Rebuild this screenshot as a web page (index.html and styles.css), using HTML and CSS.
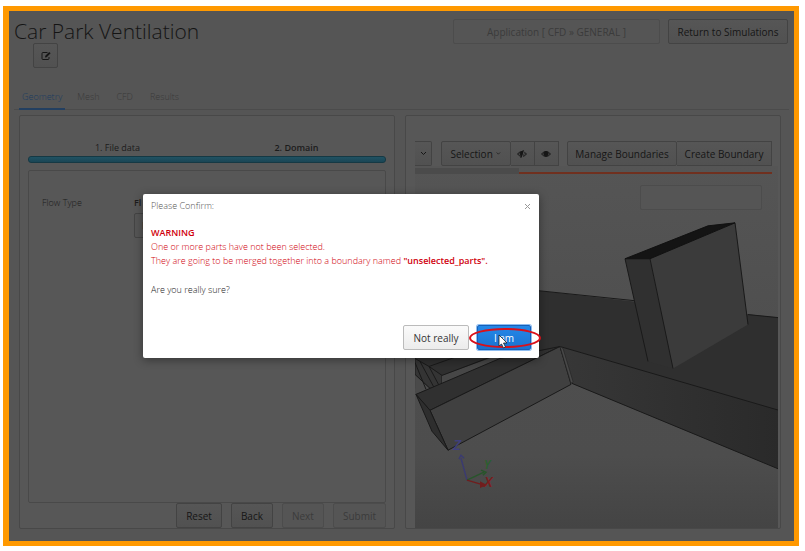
FILE: index.html
```html
<!DOCTYPE html>
<html lang="en">
<head>
<meta charset="utf-8">
<title>Car Park Ventilation</title>
<link rel="stylesheet" href="styles.css">
</head>
<body>
<div class="frame">
  <header class="header">
    <div class="heading">
      <h1>Car Park Ventilation</h1>
      <button class="btn edit" aria-label="Edit name">
        <svg width="10" height="10" viewBox="0 0 10 10" fill="none" stroke="currentColor"><path d="M6.5 1.500H2Q1 1.500 1 2.500V7.500Q1 8.500 2 8.500H7Q8 8.500 8 7.500V6"/><path d="M4 6.500L4.300 4.800L8.200 .900L9.600 2.300L5.700 6.200Z" fill="currentColor" stroke="none"/></svg>
      </button>
    </div>
    <div class="actions">
      <button class="btn app" disabled>Application [ CFD » GENERAL ]</button>
      <button class="btn return">Return to Simulations</button>
    </div>
  </header>
  <nav class="tabs">
    <a href="#geometry" class="tab active">Geometry</a>
    <a href="#mesh" class="tab">Mesh</a>
    <a href="#cfd" class="tab">CFD</a>
    <a href="#results" class="tab">Results</a>
  </nav>
  <main class="main">
    <section class="panel wizard">
      <div class="steps"><span>1. File data</span><span class="current">2. Domain</span></div>
      <div class="progress"></div>
      <div class="form">
        <label for="flow">Flow Type</label>
        <div class="field"><b>Fl</b><input id="flow" class="flow" value="I"></div>
      </div>
      <div class="footer">
        <button class="btn">Reset</button>
        <button class="btn">Back</button>
        <button class="btn" disabled>Next</button>
        <button class="btn" disabled>Submit</button>
      </div>
    </section>
    <section class="panel viewer">
      <div class="toolbar">
        <button class="btn cut" aria-label="More"><svg width="7" height="5" viewBox="0 0 7 5" fill="none" stroke="currentColor"><path d="M1 1L3.500 3.500L6 1"/></svg></button>
        <div class="group">
          <button class="btn sel">Selection <svg width="7" height="5" viewBox="0 0 7 5" fill="none" stroke="currentColor"><path d="M1 1L3.500 3.500L6 1"/></svg></button>
          <button class="btn eye" aria-label="Hide"><svg width="10" height="8" viewBox="0 0 10 8" fill="none" stroke="currentColor"><path d="M.5 4Q5 -1 9.500 4Q5 9 .5 4Z"/><circle cx="5" cy="3.700" r="2" fill="currentColor"/><path d="M7.500 0L5 8" stroke="#535353"/><path d="M6.300 0L3.800 8"/></svg></button>
          <button class="btn eye" aria-label="Show"><svg width="10" height="8" viewBox="0 0 10 8" fill="none" stroke="currentColor"><path d="M.5 4Q5 -1 9.500 4Q5 9 .5 4Z"/><circle cx="5" cy="3.700" r="2.200" fill="currentColor"/></svg></button>
        </div>
        <div class="group">
          <button class="btn manage">Manage Boundaries</button>
          <button class="btn create">Create Boundary</button>
        </div>
      </div>
      <div class="stage">
        <svg class="scene" viewBox="415 165 363 363" preserveAspectRatio="none" stroke-width="1">
          <defs>
            <linearGradient id="sky" x2="0" y2="1"><stop offset="0" stop-color="#555"/><stop offset=".5" stop-color="#4e4e4e"/><stop offset=".8" stop-color="#4d4d4d"/><stop offset="1" stop-color="#444"/></linearGradient>
            <linearGradient id="wall"><stop offset="0" stop-color="#373737"/><stop offset="1" stop-color="#2a2a2a"/></linearGradient>
          </defs>
          <path fill="url(#sky)" d="M415 165H778V528H415Z"/>
          <path fill="#2f2f2f" d="M415 278L538 290L778 317V411L560 346L416 394L415 360Z"/>
          <path stroke="#191919" fill="none" d="M538 290L634 300M748 314L778 317"/>
          <path fill="#4a4a4a" d="M415 374L430 388L416 394Z"/>
          <path fill="#343434" stroke="#191919" d="M415 358L429 366L442 375V384L430 388L415 374Z"/>
          <path fill="#474747" d="M442 375L492 357H510L442 384Z"/>
          <path stroke="#191919" fill="none" d="M415 362L426 389M420 361L434 387M429 366L460 355M429 366L439 385M442 375L492 356"/>
          <path fill="#303030" stroke="#191919" d="M416 394L500 358L560 346L430 410Z"/>
          <path fill="#404040" stroke="#191919" d="M430 410L560 346L571 384L448 450Z"/>
          <path fill="#2e2e2e" stroke="#191919" d="M416 394L430 410L448 450L432 431Z"/>
          <path fill="url(#wall)" stroke="#191919" d="M560 346L779 410V469L572 383Z"/>
          <path fill="#484848" stroke="#222" stroke-width=".6" d="M560 346L563 348L573 381L571 383Z"/>
          <path fill="#303030" d="M625 258H650L673 368L648 361Z"/>
          <path fill="#3b3b3b" d="M650 258L735 222L748 324L673 368Z"/>
          <path stroke="#191919" fill="none" d="M648 361L625 258M673 368L650 258M735 222L748 324"/>
          <path fill="#141414" stroke="#111" d="M625 258L708 225L735 222L650 258Z"/>
          <g fill="none" stroke-width="1.500">
            <path stroke="#3b3b70" d="M467 480L461 458M459 459L461 455L464 458"/>
            <path stroke="#28552b" d="M467 480L484 472M481 470L486 472L483 475"/>
            <path stroke="#701d1d" d="M467 480L484 485"/><path fill="#701d1d" stroke="none" d="M480 481L487 485L480 488Z"/>
          </g>
          <g class="axes"><text x="453" y="450" fill="#3f3f7c">Z</text><text x="484" y="469" fill="#2a602e" class="y">Y</text><text x="484" y="487" fill="#7a1d1d">X</text></g>
        </svg>
        <div class="loading"><i></i></div>
        <input class="search" aria-label="Part name">
      </div>
    </section>
  </main>

  <div class="dialog" role="dialog" aria-labelledby="confirm-title">
    <div class="caption"><span id="confirm-title">Please Confirm:</span><button class="close" aria-label="Close"><svg width="7" height="7" viewBox="0 0 7 7" stroke="currentColor"><path d="M1 1L6 6M6 1L1 6"/></svg></button></div>
    <p class="warning"><b>WARNING</b><br>One or more parts have not been selected.<br>They are going to be merged together into a boundary named <b>"unselected_parts".</b></p>
    <p class="question">Are you really sure?</p>
    <div class="choices">
      <button class="btn no">Not really</button>
      <button class="btn yes">I am</button>
      <svg class="marker" width="74" height="24" viewBox="0 0 74 24"><ellipse cx="37" cy="12" rx="35" ry="9" fill="none" stroke="#d9101a" stroke-width="2"/><path d="M31 9V20L33.500 18L35.500 22L37.500 21L35.500 17H39Z" fill="#fff" stroke="#222" stroke-width=".8"/></svg>
    </div>
  </div>
</div>
</body>
</html>
```
FILE: styles.css
```css
* { box-sizing: border-box; }
body {
  margin: 0;
  padding: 6px 6px 5px 3px;
  background: #fff;
  font: 9px/14px "Open Sans", sans-serif;
  color: #1c1c1c;
}
.frame {
  position: relative;
  display: flex;
  flex-direction: column;
  min-height: calc(100vh - 11px);
  border: 5px solid #ff9900;
  border-left-width: 6px;
  background: #555;
  padding: 0 5px 12px;
}
.header { display: flex; justify-content: space-between; height: 79px; }
.heading { padding-top: 4px; }
h1 { margin: 0; font-size: 21px; line-height: 32px; font-weight: 300; color: #141414; }
.btn {
  display: inline-flex;
  align-items: center;
  justify-content: center;
  gap: 3px;
  height: 25px;
  padding: 0 9px;
  border: 1px solid #434343;
  border-radius: 2px;
  background: linear-gradient(#565656, #515151);
  font: inherit;
  font-size: 10px;
  white-space: nowrap;
  color: #161616;
}
.btn:disabled { color: #3b3b3b; border-color: #4c4c4c; background: #555; }
.edit { width: 25px; padding: 0; margin: -4px 0 0 19px; display: flex; }
.actions { display: flex; gap: 8px; padding: 8px 1px 0 0; }
.app { width: 207px; }
.return { width: 120px; }
.tabs { display: flex; gap: 17px; height: 20px; padding-left: 5px; border-bottom: 1px solid #4b4b4b; font-weight: 300; }
.tab { height: 20px; color: #3a3a3a; text-decoration: none; }
.active { padding: 0 3px; margin-right: -5px; color: #1c3c60; border-bottom: 2px solid #233f60; }
.main { display: grid; grid-template-columns: 1fr 1fr; gap: 10px; flex: 1; padding: 5px 8px 0 5px; }
.panel { border: 1px solid #484848; border-radius: 2px; background: #575757; min-width: 0; }
.wizard { display: flex; flex-direction: column; padding: 25px 8px 0; }
.steps { display: grid; grid-template-columns: 1fr 1fr; text-align: center; }
.current { font-weight: 600; }
.progress { height: 7px; margin-top: 1px; border: 1px solid #153944; border-radius: 3px; background: linear-gradient(#205263, #1a4655); }
.form { display: flex; flex: 1; margin-top: 7px; padding: 25px 0 0 13px; border: 1px solid #494949; border-radius: 2px; font-weight: 300; }
.form label { width: 92px; }
.field b { display: block; font-weight: 600; }
.flow { width: 200px; height: 25px; margin-top: 3px; padding: 0 7px; background: #555; border: 1px solid #444; border-radius: 2px; font: inherit; color: #161616; }
.footer { display: flex; justify-content: flex-end; gap: 9px; }
.viewer { display: flex; flex-direction: column; padding: 25px 2px 0 9px; }
.toolbar { display: flex; justify-content: space-between; padding-right: 6px; }
.cut { width: 17px; padding: 0; border-left: 0; border-radius: 0 2px 2px 0; }
.group { display: flex; }
.group .btn + .btn { border-left: 0; border-radius: 0; }
.sel { width: 70px; }
.eye { width: 24px; padding: 0; }
.manage { width: 110px; }
.create { width: 95px; }
.stage { position: relative; flex: 1; min-height: 0; }
.scene { position: absolute; inset: 0; width: 100%; height: 100%; }
.loading { position: absolute; top: 2px; left: 0; right: 6px; height: 6px; background: linear-gradient(90deg, #4b4b4b 104px, transparent 104px); }
.loading i { position: absolute; left: 104px; right: 0; bottom: 0; height: 2px; background: #70301f; }
.search { position: absolute; top: 19px; right: 16px; width: 122px; height: 25px; background: #555; border: 1px solid #4c4c4c; border-radius: 2px; }
.axes { font: italic 600 15px "Open Sans", sans-serif; }
.y { font-size: 12px; }
.dialog {
  position: absolute;
  left: 134px;
  top: 183px;
  width: 396px;
  padding: 5px 8px 8px;
  border-radius: 2px;
  background: #fff;
  box-shadow: 0 2px 10px #0006;
  font-weight: 300;
  color: #222;
}
.caption { display: flex; justify-content: space-between; align-items: center; color: #555; }
.close { display: flex; padding: 0; border: 0; background: none; color: #999; }
.dialog p { margin: 0; }
.dialog .warning { margin-top: 13px; color: #d0000c; }
.warning b { font-weight: 600; }
.dialog .question { margin-top: 15px; }
.choices { position: relative; display: flex; justify-content: flex-end; gap: 8px; margin-top: 28px; }
.no { width: 66px; border-color: #bbb; background: linear-gradient(#fafafa, #ececec); color: #333; font-weight: 400; }
.yes { width: 54px; border-color: #1660b8; background: linear-gradient(#2488e8, #1a72d0); color: #fff; box-shadow: 0 0 0 1px #8dbcf0; font-weight: 400; }
.marker { position: absolute; right: -11px; top: 1px; }
```
